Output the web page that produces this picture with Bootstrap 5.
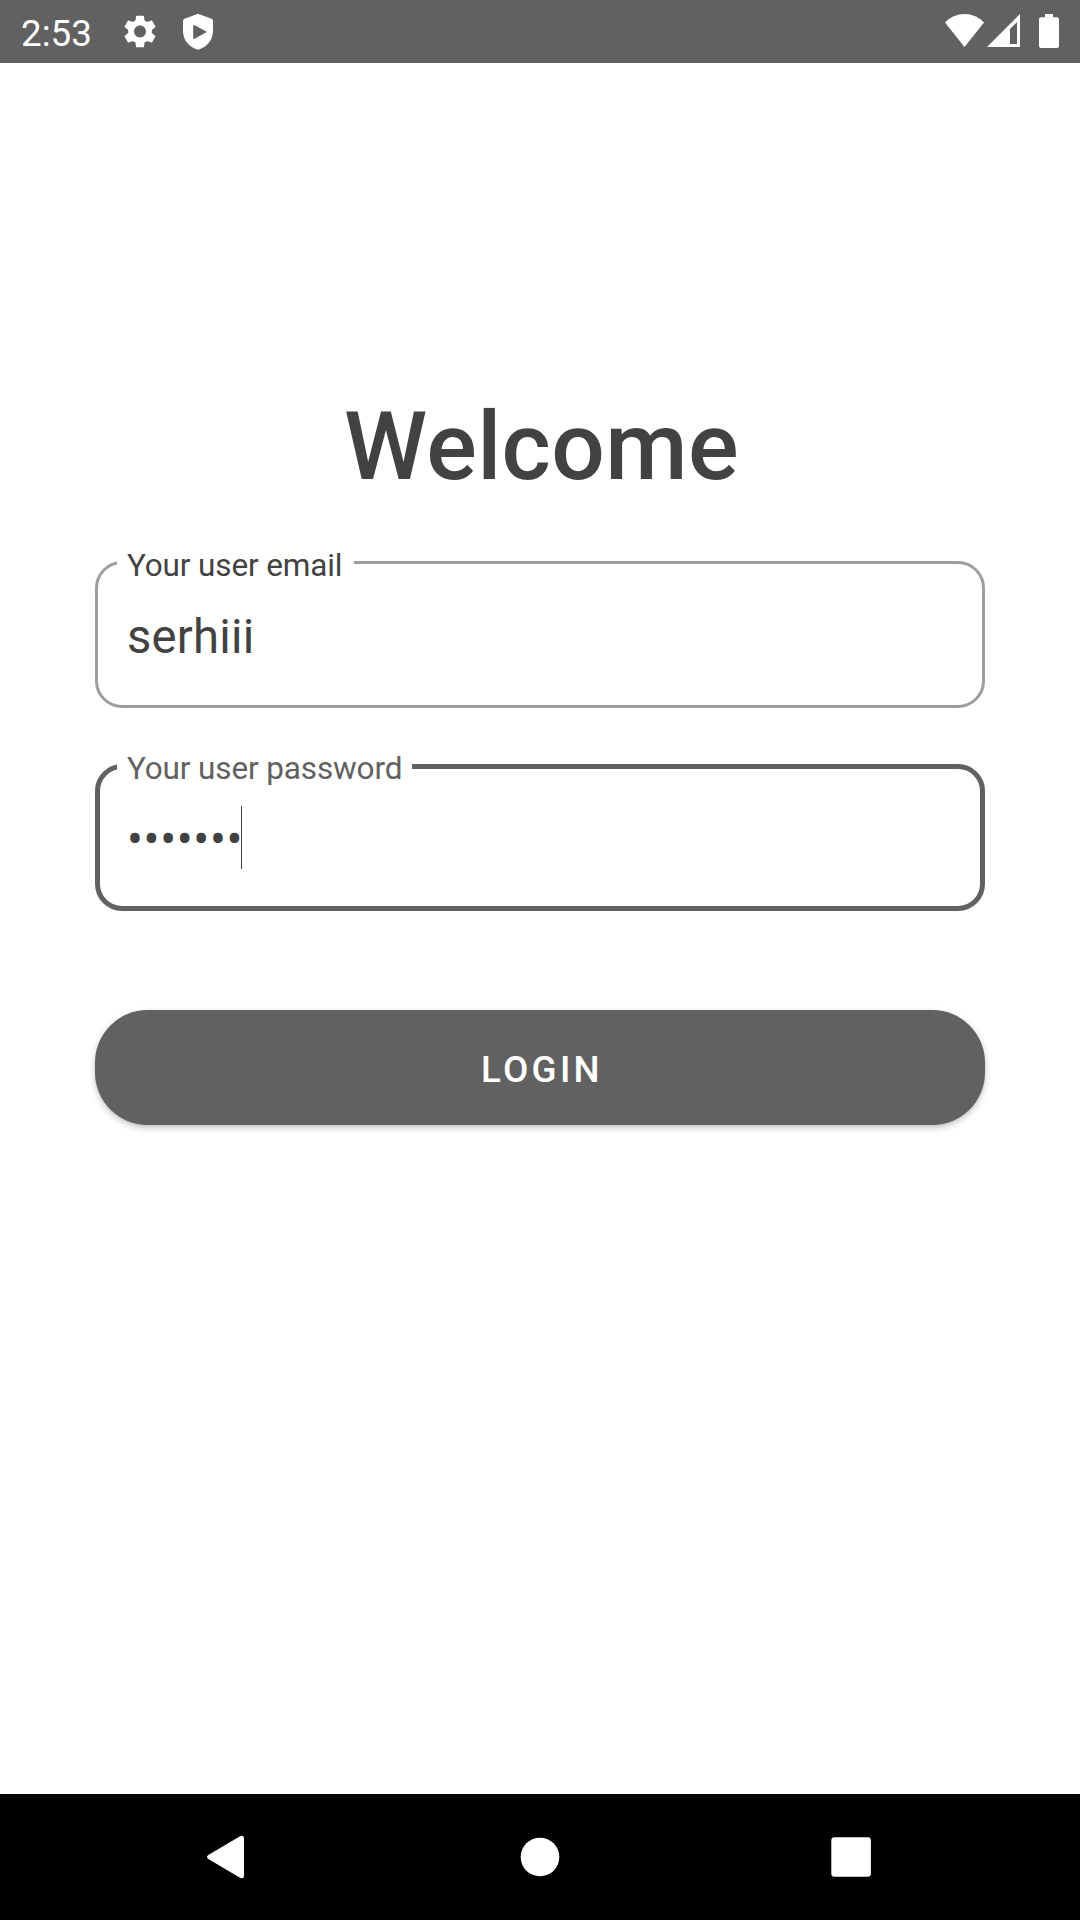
<!DOCTYPE html>
<html lang="en">
<head>
<meta charset="utf-8">
<meta name="viewport" content="width=device-width, initial-scale=1">
<title>Login</title>
<link href="https://cdn.jsdelivr.net/npm/bootstrap@5.3.0/dist/css/bootstrap.min.css" rel="stylesheet">
<style>
  body { font-family: Roboto, "Liberation Sans", sans-serif; color: #424242; height: 1920px; overflow: hidden; }
  .status-bar { height: 63px; background: #616161; color: #fff; padding-left: 21px; }
  .clock { font-size: 36.75px; line-height: 43px; padding-top: 3px; width: 99px; }
  .login-area { padding: 328px 95px 0; }
  .title { font-size: 94.5px; line-height: 111px; font-weight: 500; letter-spacing: .35px; padding-left: 3px; margin-bottom: 59px; }
  .field { height: 147px; border: 3px solid #9e9e9e; border-radius: 27px; padding: 45px 29px 0; font-size: 47.25px; line-height: 56px; letter-spacing: .2px; }
  .field.focused { border: 5px solid #616161; padding: 43px 27px 0; margin-top: 56px; margin-bottom: 99px; }
  .field-label { position: absolute; left: 19px; top: -17px; width: 237px; padding-left: 10px; background: #fff; font-size: 31.5px; line-height: 37px; letter-spacing: -.13px; }
  .focused .field-label { left: 17px; top: -19px; width: 295px; color: #616161; }
  .dots { letter-spacing: .65px; }
  .caret { width: 1px; height: 63px; margin-top: -6px; margin-left: -2px; background: #424242; }
  .login-btn, .login-btn:hover { height: 115px; border: 0; border-radius: 52.5px; padding: 3px 0 0 4px; background: #616161; color: #fff; font-size: 36.75px; line-height: 43px; font-weight: 500; letter-spacing: 3.28px; box-shadow: 0 3px 7px rgba(0,0,0,.2), 0 1px 3px rgba(0,0,0,.08); }
  .nav-keys { height: 126px; background: #000; }
</style>
</head>
<body class="d-flex flex-column bg-white">
<header class="status-bar d-flex align-items-center flex-shrink-0">
  <div class="clock">2:53</div>
  <svg width="100" height="63" viewBox="120 0 100 63" fill="#fff">
    <path transform="translate(120.2 11.7) scale(1.65)" d="M19.14 12.94c.04-.3.06-.61.06-.94 0-.32-.02-.64-.07-.94l2.03-1.58c.18-.14.23-.41.12-.61l-1.92-3.32c-.12-.22-.37-.29-.59-.22l-2.39.96c-.5-.38-1.03-.7-1.62-.94l-.36-2.54c-.04-.24-.24-.41-.48-.41h-3.84c-.24 0-.43.17-.47.41l-.36 2.54c-.59.24-1.13.57-1.62.94l-2.39-.96c-.22-.08-.47 0-.59.22L2.74 8.87c-.12.21-.08.47.12.61l2.03 1.58c-.05.3-.09.63-.09.94s.02.64.07.94l-2.03 1.58c-.18.14-.23.41-.12.61l1.92 3.32c.12.22.37.29.59.22l2.39-.96c.5.38 1.03.7 1.62.94l.36 2.54c.05.24.24.41.48.41h3.84c.24 0 .44-.17.47-.41l.36-2.54c.59-.24 1.13-.56 1.62-.94l2.39.96c.22.08.47 0 .59-.22l1.92-3.32c.12-.22.07-.47-.12-.61l-2.01-1.58zM12 15.6c-1.98 0-3.6-1.62-3.6-3.6s1.62-3.6 3.6-3.6 3.6 1.62 3.6 3.6-1.62 3.6-3.6 3.6z"/>
    <path fill-rule="evenodd" d="M198 13.7 L211.500 18.700 Q213 19.300 213 21 V31 C213 40 207 47 198 49.700 C189 47 183 40 183 31 V21 Q183 19.300 184.500 18.700 Z M193.200 26 V38 Q193.200 39.400 194.500 38.700 L206 32.600 Q207 32 206 31.300 L194.500 25.200 Q193.200 24.600 193.200 26 Z"/>
  </svg>
  <svg class="ms-auto" width="140" height="63" viewBox="940 0 140 63" fill="#fff">
    <path d="M945 22.500 Q953 14 964.500 14 Q976 14 984 22.500 L964.500 47 Z"/>
    <path fill-rule="evenodd" d="M987 47 L1020 14 V47 Z M1010 29 V44 H1017 V22 Z"/>
    <path d="M1045 14 H1053 V17.300 H1057 Q1059 17.300 1059 19.300 V46 Q1059 48 1057 48 H1041 Q1039 48 1039 46 V19.300 Q1039 17.300 1041 17.300 H1045 Z"/>
  </svg>
</header>

<main class="login-area flex-grow-1">
  <h1 class="title text-center">Welcome</h1>
  <div class="field position-relative">
    <div class="field-label">Your user email</div>
    <div>serhiii</div>
  </div>
  <div class="field focused position-relative">
    <div class="field-label">Your user password</div>
    <div class="d-flex"><span class="dots">•••••••</span><span class="caret"></span></div>
  </div>
  <button type="button" class="btn login-btn w-100 d-flex align-items-center justify-content-center">LOGIN</button>
</main>

<footer class="nav-keys flex-shrink-0">
  <svg class="d-block" width="1080" height="126" viewBox="0 1794 1080 126" fill="#fff">
    <path d="M240 1836.200 Q244 1834.800 244 1838.500 V1875.500 Q244 1879.200 240 1877.800 L208.300 1859 Q205.700 1857 208.300 1855 Z"/>
    <circle cx="540" cy="1857" r="19.300"/>
    <rect x="831.300" y="1837.200" width="39.600" height="39.600" rx="3"/>
  </svg>
</footer>
<script src="https://cdn.jsdelivr.net/npm/bootstrap@5.3.0/dist/js/bootstrap.bundle.min.js"></script>
</body>
</html>
